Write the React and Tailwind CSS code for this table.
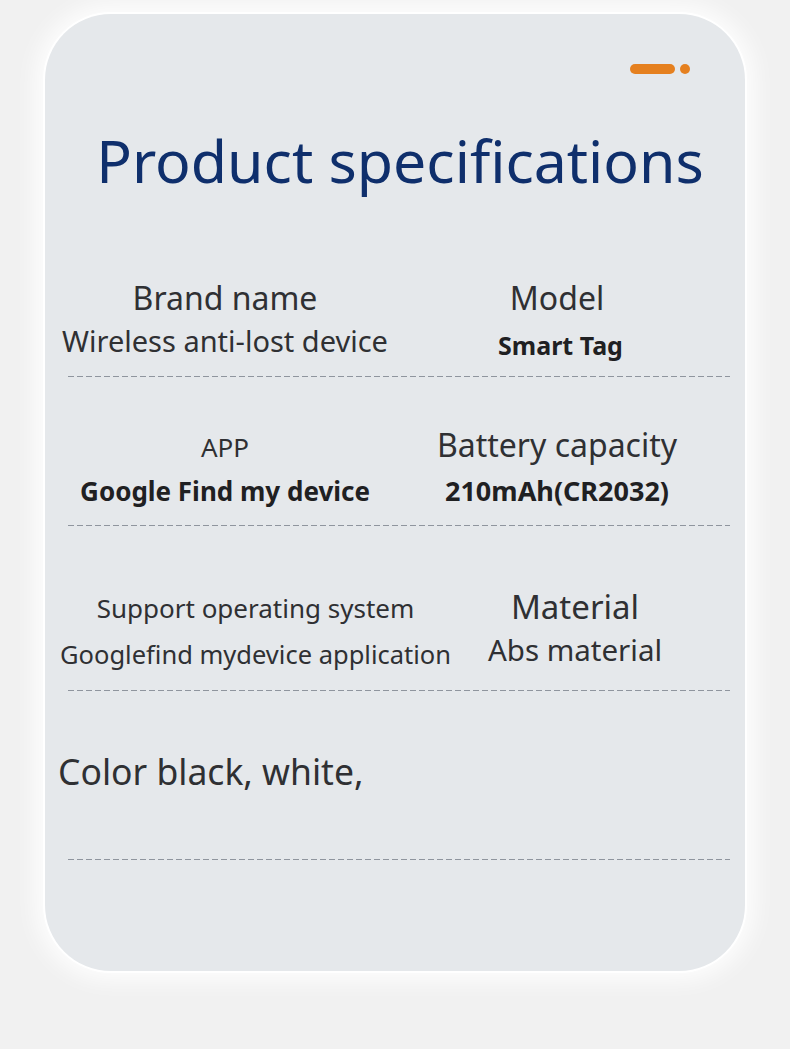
export default function App() {
  const divider = (
    <div className="ml-[23px] h-px w-[662px] bg-[linear-gradient(to_right,#8f959e_6px,transparent_6px)] bg-[length:9px_1px] bg-repeat-x" />
  )

  return (
    <div className="min-h-[1049px] w-[790px] bg-[#f1f1f1] pt-[14px] font-['Noto_Sans','Liberation_Sans',sans-serif] text-[#2f3033]">
      <div className="ml-[45px] h-[957px] w-[700px] rounded-[66px] bg-[#e5e8eb] shadow-[0_0_0_2px_#ffffff,0_0_22px_10px_rgba(255,255,255,0.85)]">
        {/* little orange marker */}
        <div className="flex justify-end gap-[5px] pr-[55px] pt-[50px]">
          <div className="h-[10px] w-[45px] rounded-full bg-[#e5801f]" />
          <div className="h-[10px] w-[10px] rounded-full bg-[#e5801f]" />
        </div>

        <h1 className="mt-[46px] pl-[10px] text-center text-[59px] leading-[80px] font-normal text-[#0f2f6c]">
          Product specifications
        </h1>

        {/* brand / model */}
        <div className="mt-[78px] grid h-[98px] grid-cols-[360px_304px]">
          <div className="flex flex-col items-center">
            <div className="text-[32px] leading-[40px]">Brand name</div>
            <div className="mt-[3px] text-[29px] leading-[40px]">Wireless anti-lost device</div>
          </div>
          <div className="flex flex-col items-center">
            <div className="text-[32px] leading-[40px]">Model</div>
            <div className="mt-[7px] pl-[7px] text-[25px] font-bold leading-[40px] text-[#1f2022]">Smart Tag</div>
          </div>
        </div>
        {divider}

        {/* app / battery */}
        <div className="grid h-[148px] grid-cols-[360px_304px] pt-[50px]">
          <div className="flex flex-col items-center">
            <div className="text-[26px] leading-[40px]">APP</div>
            <div className="mt-[4px] text-[26px] font-bold leading-[40px] text-[#1f2022]">Google Find my device</div>
          </div>
          <div className="flex flex-col items-center">
            <div className="-mt-[2px] text-[32px] leading-[40px]">Battery capacity</div>
            <div className="mt-[6px] text-[27px] font-bold leading-[40px] text-[#1f2022]">210mAh(CR2032)</div>
          </div>
        </div>
        {divider}

        {/* os / material */}
        <div className="grid h-[164px] grid-cols-[421px_218px] pt-[62px]">
          <div className="flex flex-col items-center">
            <div className="text-[26px] leading-[40px]">Support operating system</div>
            <div className="mt-[6px] text-[25.5px] leading-[40px]">Googlefind mydevice application</div>
          </div>
          <div className="flex flex-col items-center">
            <div className="-mt-[1px] text-[33px] leading-[40px]">Material</div>
            <div className="mt-[3px] text-[29.5px] leading-[40px]">Abs material</div>
          </div>
        </div>
        {divider}

        {/* colour */}
        <div className="h-[168px] pl-[13px] pt-[58px]">
          <div className="text-[35.5px] leading-[44px]">Color black, white,</div>
        </div>
        {divider}
      </div>
    </div>
  )
}
